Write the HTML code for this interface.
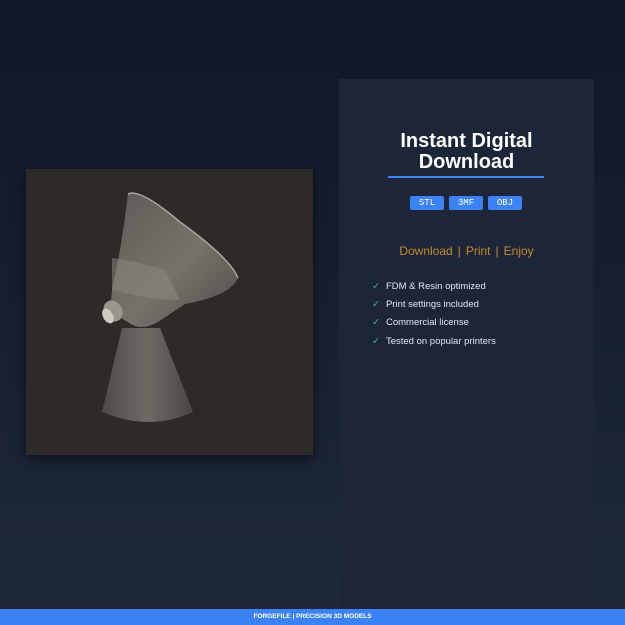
<!DOCTYPE html>
<html><head><style>
body{margin:0;width:625px;height:625px;overflow:hidden;background:linear-gradient(#0f172a,#1e293b);font-family:"Liberation Sans",sans-serif;position:relative}
.panel{position:absolute;left:339px;top:79px;width:255px;height:530px;background:#1c2638}
.img{position:absolute;left:26px;top:169px;width:287px;height:286px;background:#2d2a27;box-shadow:0 4px 12px rgba(0,0,0,.5)}
h1{position:absolute;left:339px;width:255px;top:131px;margin:0;text-align:center;color:#fff;font-size:20px;line-height:21px;font-weight:bold}
.line{position:absolute;left:388px;top:176px;width:156px;height:2px;background:#3b82f6}
.tag{position:absolute;top:196px;height:14px;width:34px;background:#3b82f6;color:#fff;font-family:"Liberation Mono",monospace;font-size:9px;line-height:14px;text-align:center;border-radius:2px}
.dl{position:absolute;left:339px;width:255px;top:244px;text-align:center;color:#c98a2e;font-size:12px}
.dl span{color:#c98a2e;margin:0 5px}
.li{position:absolute;left:372px;color:#e2e8f0;font-size:9.5px}
.li b{color:#3fb99d;font-weight:normal;margin-right:6px}
.foot{position:absolute;left:0;top:609px;width:625px;height:16px;background:#3b82f6;color:#fff;font-size:6.5px;font-weight:bold;text-align:center;line-height:16px}
</style></head><body>
<div class="panel"></div>
<div class="img"></div>
<svg width="625" height="625" style="position:absolute;left:0;top:0">
<defs>
<linearGradient id="c" x1="0" x2="1"><stop offset="0" stop-color="#4e4a46"/><stop offset=".5" stop-color="#6e6a64"/><stop offset="1" stop-color="#4a4743"/></linearGradient>
<linearGradient id="f" x1="0" y1="0" x2="1" y2="1"><stop offset="0" stop-color="#5e5a55"/><stop offset=".55" stop-color="#77726b"/><stop offset="1" stop-color="#4e4a46"/></linearGradient>
</defs>
<path d="M122 328 L160 328 L193 412 Q150 432 102 412 Z" fill="url(#c)"/>
<path d="M128 194 Q138 188 180 222 Q230 258 238 278 Q230 296 185 304 L158 322 Q140 332 128 322 L110 312 L112 290 Q122 245 128 194 Z" fill="url(#f)"/>
<path d="M112 258 Q140 262 165 270 L180 300 Q150 300 112 290 Z" fill="#8c877f" opacity=".55"/>
<path d="M128 194 Q140 188 180 222 Q230 258 238 278" fill="none" stroke="#aaa59d" stroke-width="1.5"/>
<ellipse cx="113" cy="311" rx="9" ry="11" fill="#9a958d" transform="rotate(-30 113 311)"/>
<ellipse cx="108" cy="316" rx="5" ry="8" fill="#cfcac2" transform="rotate(-30 108 316)"/>
</svg>
<h1>Instant Digital<br>Download</h1>
<div class="line"></div>
<div class="tag" style="left:410px">STL</div>
<div class="tag" style="left:449px">3MF</div>
<div class="tag" style="left:488px">OBJ</div>
<div class="dl">Download<span>|</span>Print<span>|</span>Enjoy</div>
<div class="li" style="top:281px"><b>✓</b>FDM &amp; Resin optimized</div>
<div class="li" style="top:299px"><b>✓</b>Print settings included</div>
<div class="li" style="top:317px"><b>✓</b>Commercial license</div>
<div class="li" style="top:336px"><b>✓</b>Tested on popular printers</div>
<div class="foot">FORGEFILE | PRECISION 3D MODELS</div>
</body></html>
